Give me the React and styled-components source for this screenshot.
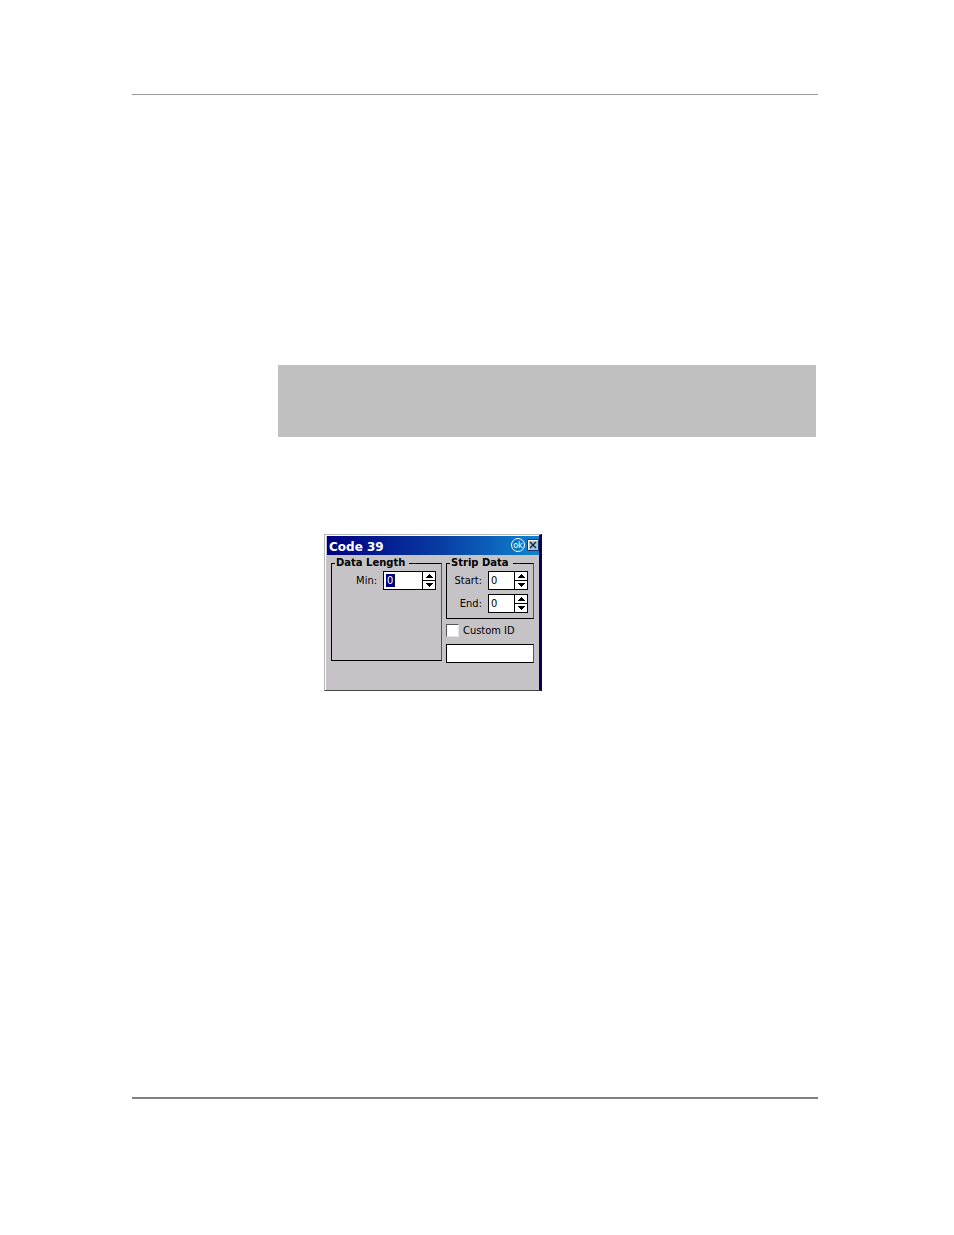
import React, { useState } from 'react';
import styled, { createGlobalStyle } from 'styled-components';

const GlobalStyle = createGlobalStyle`
    body {
        margin: 0;
        background: #fff;
    }
    *, *::before, *::after {
        box-sizing: border-box;
    }
`;

const Page = styled.main`
    display: flex;
    flex-direction: column;
    min-height: 100vh;
    padding: 94px 136px 136px 132px;
    font-family: "DejaVu Sans Condensed", "DejaVu Sans", sans-serif;
    font-size: 11px;
    color: #000;
`;

const Rule = styled.hr`
    width: 100%;
    height: ${props => props.$thickness || 1}px;
    margin: 0;
    border: 0;
    background: ${props => props.$color || "#999"};
`;

const Content = styled.section`
    flex: 1;
    padding: 270px 2px 0 146px;
`;

const Note = styled.div`
    height: 72px;
    background: #c0c0c0;
`;

const Dialog = styled.form`
    display: flex;
    flex-direction: column;
    width: 218px;
    margin: 97px 0 0 46px;
    border: 1px solid #b8b8b8;
    border-right: 3px solid #0a0050;
    border-bottom-color: #444;
    background: #c6c3c6;
    box-shadow: inset 1px 1px #fff;
`;

const TitleBar = styled.header`
    display: flex;
    align-items: flex-start;
    height: 19px;
    margin: 1px 0 0 2px;
    padding: 2px 0 0 2px;
    background: linear-gradient(to right, #000080, #0838a0 50%, #1084d0);
`;

const Title = styled.h1`
    flex: 1;
    margin: 0;
    color: #fff;
    font-family: "DejaVu Sans", sans-serif;
    font-size: 12px;
    line-height: 18px;
`;

const TitleButtons = styled.div`
    display: flex;
    align-items: center;
    gap: 2px;
`;

const OkButton = styled.button`
    display: flex;
    align-items: center;
    justify-content: center;
    width: 14px;
    height: 14px;
    padding: 0;
    border: 1px solid #fff;
    border-radius: 50%;
    background: none;
    color: #fff;
    font: 9px/12px "DejaVu Sans Condensed", sans-serif;
`;

const CloseButton = styled.button`
    display: flex;
    padding: 0;
    border: 0;
    background: none;
`;

const Body = styled.div`
    display: flex;
    gap: 4px;
    padding: 1px 5px 27px 6px;
`;

const Column = styled.div`
    display: flex;
    flex-direction: column;
    width: 88px;
`;

const Group = styled.fieldset`
    flex: ${props => props.$grow ? 1 : "none"};
    display: flex;
    flex-direction: column;
    align-items: flex-end;
    gap: 4px;
    min-width: 0;
    height: ${props => props.$height}px;
    margin: 0;
    padding: 1px 5px 0 0;
    border: 1px solid #000;
    border-right-color: #555;
`;

const Legend = styled.legend`
    margin-left: 3px;
    padding: 0 4px 0 1px;
    font-family: "DejaVu Sans", sans-serif;
    font-size: 10px;
    font-weight: bold;
    line-height: 14px;
`;

const Field = styled.div`
    display: flex;
    align-items: center;
    gap: 6px;
`;

const SpinBox = styled.div`
    display: flex;
    width: ${props => props.$width}px;
    height: 19px;
    border: 1px solid #000;
    background: #fff;
`;

const SpinInput = styled.input`
    flex: 1;
    min-width: 0;
    padding: 0 0 0 2px;
    border: 0;
    outline: 0;
    background: transparent;
    font: inherit;
`;

// the selected value is drawn over a navy block
const SelectedInput = styled(SpinInput)`
    flex: none;
    width: 9px;
    margin: 2px auto 2px 2px;
    padding: 0 0 0 1px;
    background: #000084;
    color: #fff;
`;

const SpinButtons = styled.div`
    display: flex;
    flex-direction: column;
    width: 13px;
    border-left: 1px solid #000;
`;

const SpinButton = styled.button`
    flex: 1;
    display: flex;
    align-items: center;
    justify-content: center;
    padding: 0;
    border: 0;
    background: #fff;

    & + & {
        border-top: 1px solid #000;
    }
`;

const CheckRow = styled.label`
    display: flex;
    align-items: center;
    gap: 4px;
    height: 13px;
    margin: 5px 0 7px;
`;

const CheckBox = styled.input`
    appearance: none;
    width: 13px;
    height: 13px;
    margin: 0;
    border: 1px solid #e4e2e4;
    border-top-color: #555;
    border-left-color: #555;
    background: #fff;
`;

const CustomInput = styled.input`
    width: 100%;
    height: 19px;
    padding: 0 3px;
    border: 1px solid #000;
    border-right-color: #555;
    background: #fff;
    font: inherit;
`;

const Arrow = ({ down }) => (
    <svg width="7" height="4" viewBox="0 0 7 4" shapeRendering="crispEdges">
        <path d={down ? "M0 0h7v1h-1v1h-1v1h-1v1h-1v-1h-1v-1h-1v-1h-1z" : "M3 0h1v1h1v1h1v1h1v1h-7v-1h1v-1h1v-1h1z"} />
    </svg>
);

const Spinner = ({ id, label, width, selected }) => {
    const [value, setValue] = useState(0);
    const Input = selected ? SelectedInput : SpinInput;

    return (
        <Field>
            <label htmlFor={id}>{label}</label>
            <SpinBox $width={width}>
                <Input id={id} value={value} onChange={e => setValue(Number(e.target.value) || 0)} />
                <SpinButtons>
                    <SpinButton type="button" aria-label="Increase" onClick={() => setValue(value + 1)}>
                        <Arrow />
                    </SpinButton>
                    <SpinButton type="button" aria-label="Decrease" onClick={() => setValue(Math.max(0, value - 1))}>
                        <Arrow down />
                    </SpinButton>
                </SpinButtons>
            </SpinBox>
        </Field>
    );
};

const CloseIcon = () => (
    <svg width="12" height="12" viewBox="0 0 12 12" fill="none">
        <path d="M.5 .5h11v11h-11z" fill="#9cc8e8" stroke="#17386a" />
        <path d="M1.5 10.5v-9h9" stroke="#fff" />
        <path d="M3 3l6 6M9 3l-6 6" stroke="#222" strokeWidth="1.4" />
    </svg>
);

const App = () => {
    return (
        <Page>
            <GlobalStyle />
            <Rule />
            <Content>
                <Note />
                <Dialog onSubmit={e => e.preventDefault()}>
                    <TitleBar>
                        <Title>Code 39</Title>
                        <TitleButtons>
                            <OkButton type="submit">ok</OkButton>
                            <CloseButton type="button" aria-label="Close"><CloseIcon /></CloseButton>
                        </TitleButtons>
                    </TitleBar>
                    <Body>
                        <Group $grow $height={105}>
                            <Legend>Data Length</Legend>
                            <Spinner id="min" label="Min:" width={53} selected />
                        </Group>
                        <Column>
                            <Group $height={63}>
                                <Legend>Strip Data</Legend>
                                <Spinner id="start" label="Start:" width={40} />
                                <Spinner id="end" label="End:" width={40} />
                            </Group>
                            <CheckRow>
                                <CheckBox type="checkbox" />
                                Custom ID
                            </CheckRow>
                            <CustomInput aria-label="Custom ID value" />
                        </Column>
                    </Body>
                </Dialog>
            </Content>
            <Rule $thickness={2} $color="#808080" />
        </Page>
    );
};

export default App;
